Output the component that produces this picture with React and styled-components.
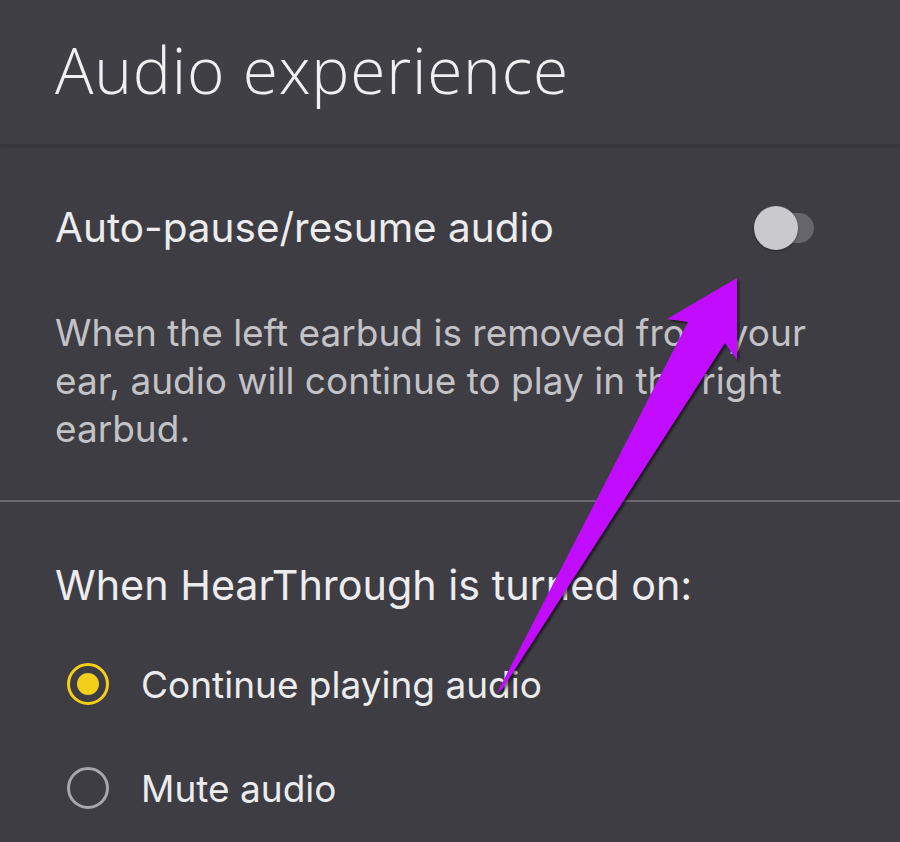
import React from "react";
import styled, { createGlobalStyle } from "styled-components";

const Global = createGlobalStyle`
  html, body { margin: 0; padding: 0; background: #3f3e44; }
  body { font-family: "Inter", "Open Sans", sans-serif; }
`;

const Page = styled.div`
  position: relative;
  width: 900px;
  height: 842px;
  overflow: hidden;
  background: #3e3d43;
  color: #ececee;
`;

const Header = styled.header`
  height: 145px;
  display: flex;
  align-items: center;
  padding: 0 0 0 55px;
  background: #403f45;
  border-bottom: 1px solid #38373c;
  box-shadow: 0 2px 3px rgba(0, 0, 0, 0.15);
  box-sizing: border-box;
`;

const Title = styled.h1`
  margin: -5px 0 0 0;
  font-family: "Open Sans", sans-serif;
  font-weight: 300;
  font-size: 64px;
  letter-spacing: 0.8px;
  color: #f0f0f2;
`;

const Section = styled.section`
  padding: ${(p) => p.$pad};
  border-bottom: ${(p) => (p.$divider ? "2px solid #6c6b70" : "none")};
`;

const Row = styled.div`
  display: flex;
  align-items: center;
  justify-content: space-between;
  padding-right: 78px;
  height: 48px;
`;

const Label = styled.div`
  font-size: ${(p) => p.$size || "40.5px"};
  line-height: 48px;
  color: #ececee;
`;

const Desc = styled.p`
  margin: 57px 0 0;
  font-size: 37px;
  line-height: 48px;
  color: #c3c2c7;
  width: 790px;
`;

const Toggle = styled.div`
  position: relative;
  width: 68px;
  height: 44px;
  display: flex;
  align-items: center;
`;

const Track = styled.div`
  margin-left: 14px;
  width: 46px;
  height: 30px;
  border-radius: 15px;
  background: #67666c;
`;

const Thumb = styled.div`
  position: absolute;
  left: 0;
  top: 0;
  width: 44px;
  height: 44px;
  border-radius: 50%;
  background: #cac9ce;
  box-shadow: 0 1px 2px rgba(0, 0, 0, 0.35);
`;

const Options = styled.div`
  display: flex;
  flex-direction: column;
  gap: 58px;
  margin-top: 52px;
`;

const Option = styled.label`
  display: flex;
  align-items: center;
  gap: 32px;
  padding-left: 12px;
  font-size: 37px;
  color: #ececee;
  height: 46px;
`;

const Radio = styled.span`
  width: 42px;
  height: 42px;
  border-radius: 50%;
  box-sizing: border-box;
  border: 3px solid ${(p) => (p.$on ? "#f4cf1a" : "#a8a7ac")};
  display: flex;
  align-items: center;
  justify-content: center;
  flex: none;
  &::after {
    content: "";
    width: 22px;
    height: 22px;
    border-radius: 50%;
    background: ${(p) => (p.$on ? "#f4cf1a" : "transparent")};
  }
`;

const ArrowOverlay = styled.svg`
  position: absolute;
  left: 0;
  top: 0;
  pointer-events: none;
  filter: drop-shadow(2px 2px 1px rgba(0, 0, 0, 0.55));
`;

export default function App() {
  return (
    <Page>
      <Global />
      <Header>
        <Title>Audio experience</Title>
      </Header>
      <Section $pad="59px 0 47px 55px" $divider>
        <Row>
          <Label>Auto-pause/resume audio</Label>
          <Toggle>
            <Track />
            <Thumb />
          </Toggle>
        </Row>
        <Desc>
          When the left earbud is removed from your ear, audio will continue to
          play in the right earbud.
        </Desc>
      </Section>
      <Section $pad="59px 0 0 55px">
        <Label $size="41.3px">When HearThrough is turned on:</Label>
        <Options>
          <Option>
            <Radio $on />
            Continue playing audio
          </Option>
          <Option>
            <Radio />
            Mute audio
          </Option>
        </Options>
      </Section>
      <ArrowOverlay width="900" height="842" viewBox="0 0 900 842">
        <polygon
          points="497,693 688,322 667,319 737,278 737,360 725,343 503,688"
          fill="#c10cff"
        />
      </ArrowOverlay>
    </Page>
  );
}
